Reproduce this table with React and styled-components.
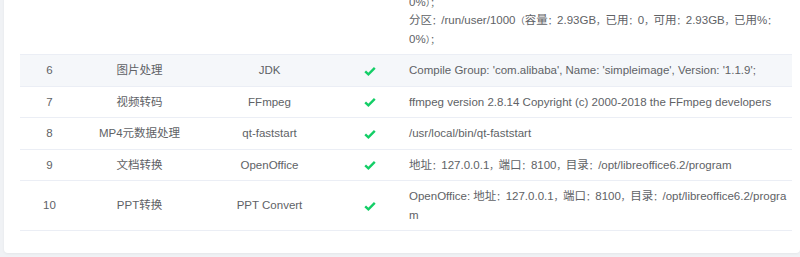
import React from 'react';
import styled, { createGlobalStyle } from 'styled-components';

const GlobalStyle = createGlobalStyle`
  html, body { margin: 0; padding: 0; background: #f0f2f5; }
  body { font-family: "Liberation Sans", Arial, "Noto Sans CJK SC", sans-serif; }
`;

const Viewport = styled.div`
  height: 100vh;
  overflow: hidden;
  box-sizing: border-box;
  display: flex;
  flex-direction: column;
  justify-content: flex-end;
  padding: 0 0 4px 4px;
`;

const Card = styled.section`
  flex-shrink: 0;
  background: #fff;
  border-radius: 0 0 4px 4px;
  box-shadow: 0 1px 3px rgba(0, 0, 0, 0.05);
  padding: 0 8px 22px 16px;
`;

const Table = styled.table`
  width: 100%;
  border-collapse: collapse;
  table-layout: fixed;
  font-size: 11.5px;
  color: #606266;
`;

const Row = styled.tr`
  background: ${(p) => (p.$hover ? '#f5f7fa' : '#fff')};
`;

const Cell = styled.td`
  padding: ${(p) => (p.$left ? '6px 2px 6px 9px' : '6px 0')};
  line-height: 18.5px;
  border-bottom: 1px solid #ebeef5;
  text-align: ${(p) => (p.$left ? 'left' : 'center')};
  vertical-align: middle;
  word-break: break-all;
`;

const Entry = styled.div``;

/* full-width punctuation in the reference is a little narrower than a full em */
const Punct = styled.span`
  font-size: 9.3px;
  line-height: 1;
`;

const PUNCT = /([：，（）；])/;

const typeset = (text) =>
  text.split(PUNCT).map((part, i) =>
    part.length === 1 && PUNCT.test(part) ? <Punct key={i}>{part}</Punct> : part
  );

const CheckIcon = () => (
  <svg width="12" height="10" viewBox="0 0 12 10" style={{ display: 'inline-block', verticalAlign: 'middle' }}>
    <path d="M1.2 5.3 L4.4 8.3 L10.8 1.8" fill="none" stroke="#13ce66" strokeWidth="2.4" />
  </svg>
);

const partitions = [
  '分区：/sys/fs/cgroup（容量：2.93GB，已用：0，可用：2.93GB，已用%：0%）；',
  '分区：/run/user/1002（容量：2.93GB，已用：0，可用：2.93GB，已用%：0%）；',
  '分区：/run/user/1001（容量：2.93GB，已用：0，可用：2.93GB，已用%：0%）；',
  '分区：/run/user/1000（容量：2.93GB，已用：0，可用：2.93GB，已用%：0%）；',
];

const rows = [
  { no: 6, name: '图片处理', tool: 'JDK', info: "Compile Group: 'com.alibaba', Name: 'simpleimage', Version: '1.1.9';", hover: true },
  { no: 7, name: '视频转码', tool: 'FFmpeg', info: 'ffmpeg version 2.8.14 Copyright (c) 2000-2018 the FFmpeg developers' },
  { no: 8, name: 'MP4元数据处理', tool: 'qt-faststart', info: '/usr/local/bin/qt-faststart' },
  { no: 9, name: '文档转换', tool: 'OpenOffice', info: '地址：127.0.0.1，端口：8100，目录：/opt/libreoffice6.2/program' },
  { no: 10, name: 'PPT转换', tool: 'PPT Convert', info: 'OpenOffice: 地址：127.0.0.1，端口：8100，目录：/opt/libreoffice6.2/program' },
];

export default function App() {
  return (
    <>
      <GlobalStyle />
      <Viewport>
        <Card>
          <Table>
            <colgroup>
              <col style={{ width: 59 }} />
              <col style={{ width: 121 }} />
              <col style={{ width: 139 }} />
              <col style={{ width: 61 }} />
              <col />
            </colgroup>
            <tbody>
              <Row>
                <Cell>5</Cell>
                <Cell>磁盘空间</Cell>
                <Cell>Disk</Cell>
                <Cell><CheckIcon /></Cell>
                <Cell $left>
                  {partitions.map((p, i) => (
                    <Entry key={i}>{typeset(p)}</Entry>
                  ))}
                </Cell>
              </Row>
              {rows.map((r) => (
                <Row key={r.no} $hover={r.hover}>
                  <Cell>{r.no}</Cell>
                  <Cell>{r.name}</Cell>
                  <Cell>{r.tool}</Cell>
                  <Cell><CheckIcon /></Cell>
                  <Cell $left>{typeset(r.info)}</Cell>
                </Row>
              ))}
            </tbody>
          </Table>
        </Card>
      </Viewport>
    </>
  );
}
